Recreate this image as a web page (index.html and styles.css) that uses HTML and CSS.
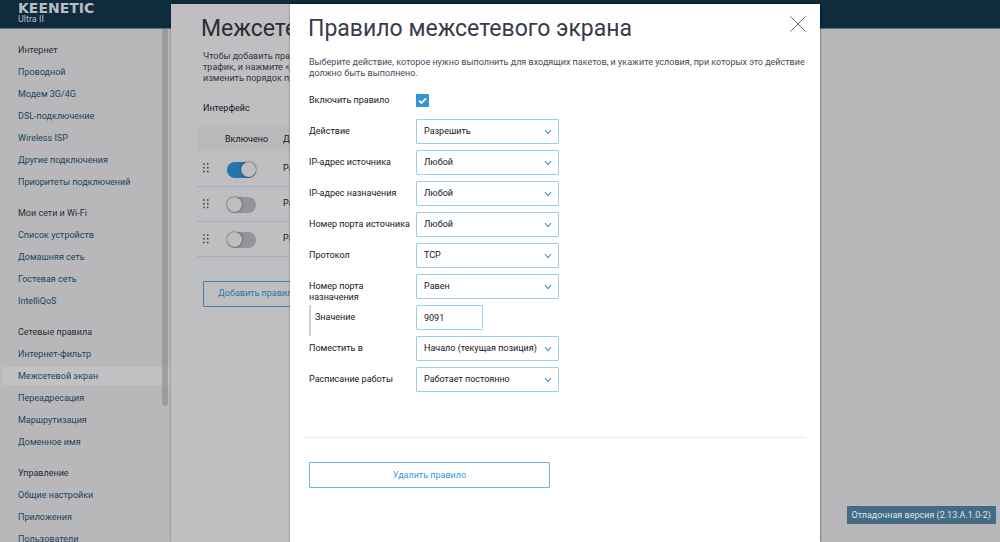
FILE: index.html
```html
<!DOCTYPE html>
<html lang="ru">
<head>
<meta charset="utf-8">
<meta name="viewport" content="width=device-width, initial-scale=1">
<title>Правило межсетевого экрана</title>
<link rel="stylesheet" href="styles.css">
</head>
<body>
<svg class="sprite" aria-hidden="true">
  <symbol id="chevron" viewBox="0 0 8 6"><path d="M1 1.2 4 4.6 7 1.2" fill="none" stroke="currentColor" stroke-width="1.1"/></symbol>
  <symbol id="grip" viewBox="0 0 6 10"><path d="M.2.2h1.5v1.5H.2zM4 .2h1.5v1.5H4zM.2 4h1.5v1.5H.2zM4 4h1.5v1.5H4zM.2 7.8h1.5v1.5H.2zM4 7.8h1.5v1.5H4z" fill="currentColor"/></symbol>
</svg>

<div class="app">
  <header class="header">
    <div class="logo">KEENETIC</div>
    <div class="model">Ultra II</div>
  </header>

  <nav class="sidebar">
    <section class="group">
      <h2 class="group-title">Интернет</h2>
      <a class="nav-link" href="#">Проводной</a>
      <a class="nav-link" href="#">Модем 3G/4G</a>
      <a class="nav-link" href="#">DSL-подключение</a>
      <a class="nav-link" href="#">Wireless ISP</a>
      <a class="nav-link" href="#">Другие подключения</a>
      <a class="nav-link" href="#">Приоритеты подключений</a>
    </section>
    <section class="group">
      <h2 class="group-title">Мои сети и Wi-Fi</h2>
      <a class="nav-link" href="#">Список устройств</a>
      <a class="nav-link" href="#">Домашняя сеть</a>
      <a class="nav-link" href="#">Гостевая сеть</a>
      <a class="nav-link" href="#">IntelliQoS</a>
    </section>
    <section class="group">
      <h2 class="group-title">Сетевые правила</h2>
      <a class="nav-link" href="#">Интернет-фильтр</a>
      <a class="nav-link active" href="#">Межсетевой экран</a>
      <a class="nav-link" href="#">Переадресация</a>
      <a class="nav-link" href="#">Маршрутизация</a>
      <a class="nav-link" href="#">Доменное имя</a>
    </section>
    <section class="group">
      <h2 class="group-title">Управление</h2>
      <a class="nav-link" href="#">Общие настройки</a>
      <a class="nav-link" href="#">Приложения</a>
      <a class="nav-link" href="#">Пользователи</a>
    </section>
    <div class="scroll-thumb"></div>
  </nav>

  <main class="page">
    <h1 class="title">Межсетевой экран</h1>
    <p class="page-text">Чтобы добавить правило,<br>трафик, и нажмите «Добавить»<br>изменить порядок правил</p>
    <div class="iface">Интерфейс</div>
    <table class="rules">
      <thead>
        <tr><th class="col-grip"></th><th class="col-on">Включено</th><th>Действие</th></tr>
      </thead>
      <tbody>
        <tr><td class="col-grip"><svg class="grip"><use href="#grip"/></svg></td><td class="col-switch"><input class="switch" type="checkbox" checked aria-label="Правило 1"></td><td>Разрешить</td></tr>
        <tr><td class="col-grip"><svg class="grip"><use href="#grip"/></svg></td><td class="col-switch"><input class="switch" type="checkbox" aria-label="Правило 2"></td><td>Разрешить</td></tr>
        <tr><td class="col-grip"><svg class="grip"><use href="#grip"/></svg></td><td class="col-switch"><input class="switch" type="checkbox" aria-label="Правило 3"></td><td>Разрешить</td></tr>
      </tbody>
    </table>
    <button class="add" type="button">Добавить правило</button>
  </main>

  <div class="version">Отладочная версия (2.13.A.1.0-2)</div>

  <div class="dialog" role="dialog" aria-labelledby="dialog-title">
    <div class="dialog-head">
      <h1 class="title" id="dialog-title">Правило межсетевого экрана</h1>
      <button class="close" type="button" aria-label="Закрыть">
        <svg viewBox="0 0 16 16"><path d="M.3.3l15.4 15.4M15.7.3.3 15.7" stroke="currentColor" stroke-width=".8"/></svg>
      </button>
    </div>
    <p class="intro">Выберите действие, которое нужно выполнить для входящих пакетов, и укажите условия, при которых это действие должно быть выполнено.</p>
    <form class="form">
      <div class="row">
        <label class="label" for="enabled">Включить правило</label>
        <span class="check"><input class="check-input" type="checkbox" id="enabled" checked><svg class="check-mark" viewBox="0 0 12 12"><path d="M2.8 6.2 5 8.3 9.3 4" fill="none" stroke="#fff" stroke-width="1.6"/></svg></span>
      </div>
      <div class="row">
        <label class="label" for="action">Действие</label>
        <span class="pick"><select class="field" id="action"><option>Разрешить</option></select><svg class="chevron"><use href="#chevron"/></svg></span>
      </div>
      <div class="row">
        <label class="label" for="src">IP-адрес источника</label>
        <span class="pick"><select class="field" id="src"><option>Любой</option></select><svg class="chevron"><use href="#chevron"/></svg></span>
      </div>
      <div class="row">
        <label class="label" for="dst">IP-адрес назначения</label>
        <span class="pick"><select class="field" id="dst"><option>Любой</option></select><svg class="chevron"><use href="#chevron"/></svg></span>
      </div>
      <div class="row">
        <label class="label" for="sport">Номер порта источника</label>
        <span class="pick"><select class="field" id="sport"><option>Любой</option></select><svg class="chevron"><use href="#chevron"/></svg></span>
      </div>
      <div class="row">
        <label class="label" for="proto">Протокол</label>
        <span class="pick"><select class="field" id="proto"><option>TCP</option></select><svg class="chevron"><use href="#chevron"/></svg></span>
      </div>
      <div class="row">
        <label class="label" for="dport">Номер порта<br>назначения</label>
        <span class="pick"><select class="field" id="dport"><option>Равен</option></select><svg class="chevron"><use href="#chevron"/></svg></span>
      </div>
      <div class="row">
        <label class="label nested" for="value">Значение</label>
        <input class="field short" type="text" id="value" value="9091">
      </div>
      <div class="row">
        <label class="label" for="place">Поместить в</label>
        <span class="pick"><select class="field" id="place"><option>Начало (текущая позиция)</option></select><svg class="chevron"><use href="#chevron"/></svg></span>
      </div>
      <div class="row">
        <label class="label" for="schedule">Расписание работы</label>
        <span class="pick"><select class="field" id="schedule"><option>Работает постоянно</option></select><svg class="chevron"><use href="#chevron"/></svg></span>
      </div>
    </form>
    <footer class="dialog-foot">
      <button class="delete" type="button">Удалить правило</button>
    </footer>
  </div>
</div>
</body>
</html>
```

FILE: styles.css
```css
* {
  box-sizing: border-box;
}

body {
  margin: 0;
  background: #b8b8ba;
  color: #17171c;
  font: 9px/11px Roboto, "Liberation Sans", sans-serif;
}

.sprite {
  position: absolute;
  width: 0;
  height: 0;
}

.app {
  position: relative;
  height: 100vh;
  overflow: hidden;
}

.header {
  height: 29px;
  padding: 2px 18px;
  background: #0f2b3e;
  border-bottom: 1px solid #5d7280;
  color: #b9bdc2;
}

.logo {
  font: bold 14px/12px "DejaVu Sans", sans-serif;
}

.model {
  font-size: 9px;
  line-height: 10px;
}

.sidebar {
  position: relative;
  width: 171px;
  padding: 12px 0 0 2px;
  background: #b8b8ba;
}

.group {
  display: flex;
  flex-direction: column;
  gap: 4px;
  margin-bottom: 13px;
}

.group-title,
.nav-link {
  margin: 0;
  padding-left: 16px;
  font-size: 9px;
  font-weight: 400;
  line-height: 18px;
}

.group-title {
  color: #2c2c36;
}

.nav-link {
  color: #20445c;
  text-decoration: none;
}

.nav-link.active {
  background: #c1c1c3;
}

.scroll-thumb {
  position: absolute;
  top: 0;
  right: 3px;
  width: 6px;
  height: 377px;
  border-radius: 0 0 3px 3px;
  background: rgba(120, 120, 122, .45);
}

.page {
  position: absolute;
  top: 4px;
  right: 180px;
  bottom: 0;
  left: 171px;
  padding: 9px 26px;
  background: #bfbfc1;
  box-shadow: 0 0 2px rgba(0, 0, 0, .45);
}

.title {
  margin: 0;
  color: #3a3a49;
  font-size: 23px;
  font-weight: 400;
  line-height: 32px;
}

.page .title {
  padding-left: 4px;
  color: #2c2c38;
}

.page-text {
  margin: 6px 6px 19px;
  color: #34343f;
  white-space: nowrap;
}

.iface {
  margin: 0 6px 13px;
}

.rules {
  width: 100%;
  border-collapse: collapse;
  text-align: left;
}

.rules th {
  height: 24px;
  padding: 0;
  background: #b9b9bb;
  font-weight: 400;
}

.rules td {
  height: 35px;
  padding: 0;
  border-bottom: 1px solid #9fb0c1;
}

.rules .col-grip {
  width: 28px;
  padding-left: 6px;
}

.rules .col-on {
  width: 58px;
}

.rules .col-switch {
  padding-top: 3px;
}

.grip {
  display: block;
  width: 6px;
  height: 10px;
  color: #3c3c42;
}

.switch {
  display: flex;
  appearance: none;
  width: 29px;
  height: 16px;
  margin: 0 2px;
  border-radius: 8px;
  background: #949498;
}

.switch::before {
  content: "";
  width: 15px;
  height: 15px;
  border-radius: 50%;
  background: #bebec0;
  box-shadow: 0 0 2px rgba(0, 0, 0, .7);
}

.switch:checked {
  justify-content: flex-end;
  background: #2475a9;
}

.add {
  width: 120px;
  height: 26px;
  margin: 24px 6px;
  padding: 0 14px;
  border: 1px solid #4382ab;
  border-radius: 1px;
  background: none;
  color: #2878ab;
  font: inherit;
  text-align: left;
}

.version {
  position: absolute;
  right: 4px;
  bottom: 18px;
  padding: 0 5px;
  background: #446b84;
  color: #dde3e8;
  line-height: 18px;
}

.dialog {
  position: absolute;
  top: 4px;
  right: 180px;
  bottom: 0;
  left: 290px;
  padding: 9px 14px;
  background: #fff;
  box-shadow: 0 0 2px rgba(0, 0, 0, .4);
}

.dialog-head {
  display: flex;
  justify-content: space-between;
  align-items: flex-start;
  padding: 0 0 0 4px;
}

.close {
  width: 16px;
  height: 16px;
  margin-top: 3px;
  padding: 0;
  border: 0;
  background: none;
  color: #4a4a55;
}

.close svg {
  display: block;
}

.intro {
  margin: 12px -4px 9px 5px;
  color: #4a4a57;
}

.form {
  padding-left: 5px;
}

.row {
  display: flex;
  align-items: flex-start;
  min-height: 31px;
}

.label {
  width: 107px;
  padding-top: 7px;
}

.nested {
  height: 31px;
  padding-left: 4px;
  border-left: 2px solid #cfcfd2;
}

.pick,
.check {
  position: relative;
  display: flex;
}

.check {
  margin-top: 6px;
}

.check-input {
  appearance: none;
  width: 13px;
  height: 13px;
  margin: 0;
  border-radius: 1px;
  background: #2f95d8;
}

.check-mark {
  position: absolute;
  inset: 0;
  pointer-events: none;
}

.field {
  appearance: none;
  width: 143px;
  height: 25px;
  padding: 0 7px;
  border: 1px solid #9ccfed;
  border-radius: 1px;
  background: #fff;
  color: inherit;
  font: inherit;
}

.short {
  width: 67px;
}

.chevron {
  position: absolute;
  top: 10px;
  right: 7px;
  width: 8px;
  height: 6px;
  color: #4a94cb;
  pointer-events: none;
}

.dialog-foot {
  margin-top: 39px;
  padding: 24px 5px;
  border-top: 1px solid #dfebf4;
}

.delete {
  width: 241px;
  height: 26px;
  border: 1px solid #6db4e2;
  border-radius: 1px;
  background: #fff;
  color: #3a9bdb;
  font: inherit;
}
```
